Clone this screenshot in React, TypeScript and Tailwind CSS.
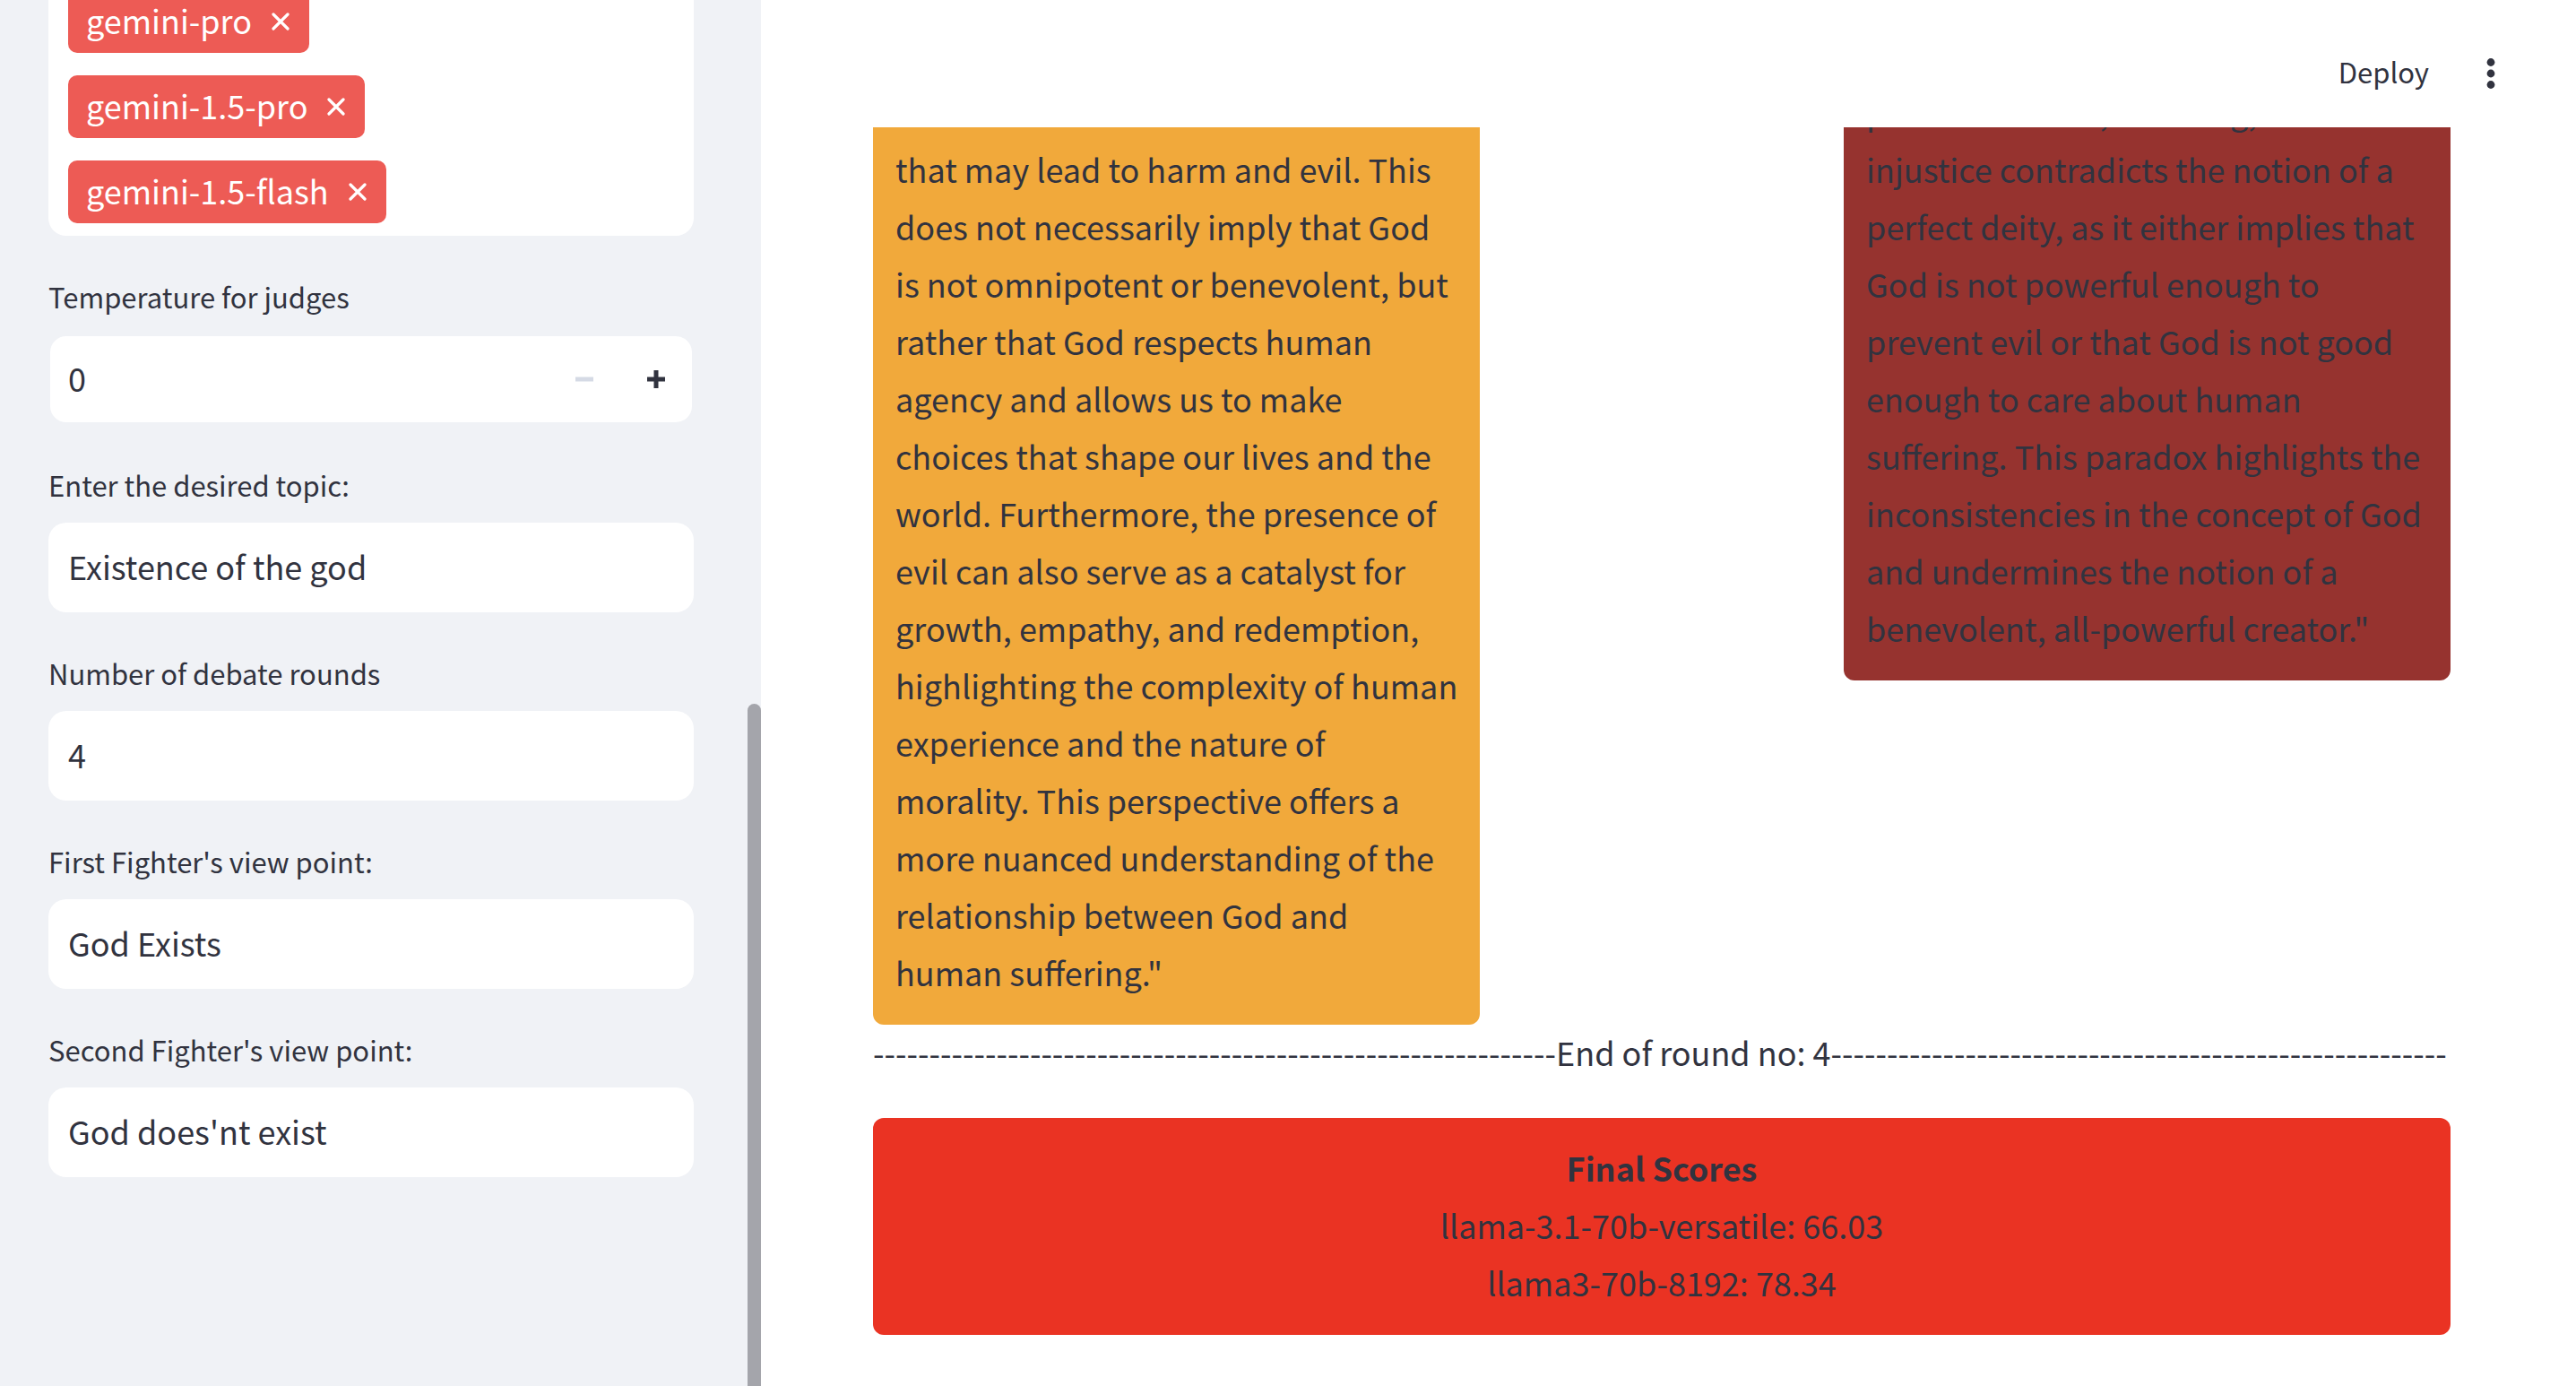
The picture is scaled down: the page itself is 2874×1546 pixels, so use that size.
import { useId, useState } from "react";

const judges = ["gemini-pro", "gemini-1.5-pro", "gemini-1.5-flash"];

function Tag({ name, onRemove }: { name: string; onRemove: () => void }) {
  return (
    <li className="flex h-[70px] items-center gap-[22px] rounded-[10px] bg-[#ed5b55] pl-5 pr-[22px] text-white">
      <span className="pb-1">{name}</span>
      <button type="button" aria-label={`Remove ${name}`} onClick={onRemove}>
        <svg viewBox="0 0 20 20" className="size-5" stroke="currentColor" strokeWidth="3.2" strokeLinecap="round">
          <path d="M2 2 18 18M18 2 2 18" />
        </svg>
      </button>
    </li>
  );
}

function FieldLabel({ id, children }: { id: string; children: string }) {
  return (
    <label htmlFor={id} className="mb-[14px] text-[31px] leading-[56px]">
      {children}
    </label>
  );
}

function TextField({ label, initial }: { label: string; initial: string }) {
  const id = useId();
  return (
    <div className="flex flex-col">
      <FieldLabel id={id}>{label}</FieldLabel>
      <input
        id={id}
        type="text"
        defaultValue={initial}
        className="h-[100px] w-full rounded-[20px] bg-white px-[22px] pb-1 outline-none"
      />
    </div>
  );
}

function Stepper({ label }: { label: string }) {
  const id = useId();
  const [value, setValue] = useState(0);
  return (
    <div className="flex flex-col">
      <FieldLabel id={id}>{label}</FieldLabel>
      <div className="flex h-[100px] rounded-[20px] border-2 border-[#f0f2f6] bg-white">
        <input
          id={id}
          type="text"
          inputMode="numeric"
          value={value}
          onChange={(e) => setValue(Number(e.target.value) || 0)}
          className="min-w-0 flex-1 pb-1 pl-5 outline-none"
        />
        <button
          type="button"
          aria-label="Decrease"
          disabled={value === 0}
          onClick={() => setValue(value - 1)}
          className="flex w-20 items-center justify-center text-[#d5dae5]"
        >
          <svg viewBox="0 0 20 20" className="size-5" fill="currentColor">
            <path d="M0 7.5h20v5H0z" />
          </svg>
        </button>
        <button
          type="button"
          aria-label="Increase"
          onClick={() => setValue(value + 1)}
          className="flex w-20 items-center justify-center"
        >
          <svg viewBox="0 0 20 20" className="size-5" fill="currentColor">
            <path d="M7.5 0h5v7.5H20v5h-7.5V20h-5v-7.5H0v-5h7.5z" />
          </svg>
        </button>
      </div>
    </div>
  );
}

function Sidebar() {
  const [selected, setSelected] = useState(judges);
  return (
    <aside className="flex w-[849px] shrink-0 overflow-hidden bg-[#f0f2f6]">
      <div className="flex flex-1 flex-col gap-10 pl-[54px] pr-[60px]">
        <ul className="-mt-[11px] flex flex-col items-start gap-[25px] rounded-b-[20px] bg-white px-[22px] pb-[14px]">
          {selected.map((name) => (
            <Tag key={name} name={name} onRemove={() => setSelected(selected.filter((n) => n !== name))} />
          ))}
        </ul>
        <Stepper label="Temperature for judges" />
        <TextField label="Enter the desired topic:" initial="Existence of the god" />
        <TextField label="Number of debate rounds" initial="4" />
        <TextField label="First Fighter's view point:" initial="God Exists" />
        <TextField label="Second Fighter's view point:" initial="God does'nt exist" />
      </div>
      <div className="flex w-[15px] flex-col pt-[785px]">
        <div className="flex-1 rounded-t-full bg-[#a4a5ab]" />
      </div>
    </aside>
  );
}

export default function App() {
  return (
    <div className="flex h-screen overflow-hidden bg-white font-['Noto_Sans_CJK_SC',sans-serif] text-[36px] leading-[64px] text-[#31333f]">
      <Sidebar />
      <div className="flex min-w-0 flex-1 flex-col">
        <header className="flex h-[142px] shrink-0 items-center justify-end gap-16 bg-white pb-[22px] pr-[90px] pt-[44px]">
          <button type="button" className="pb-1 text-[31px] leading-[60px]">
            Deploy
          </button>
          <button type="button" aria-label="Main menu">
            <svg viewBox="0 0 10 36" className="h-9 w-[10px]" fill="currentColor">
              <circle cx="5" cy="5.5" r="4.4" />
              <circle cx="5" cy="18" r="4.4" />
              <circle cx="5" cy="30.5" r="4.4" />
            </svg>
          </button>
        </header>
        <main className="min-h-0 flex-1 overflow-hidden pl-[125px] pr-[140px]">
          <div className="grid grid-cols-[5fr_3fr_5fr] items-start">
            <p className="rounded-b-xl bg-[#f1a93b] pb-[27px] pl-[25px] pr-[23px] pt-[14px]">
              that may lead to harm and evil. This does not necessarily imply that God is not omnipotent or
              benevolent, but rather that God respects human agency and allows us to make choices that shape our
              lives and the world. Furthermore, the presence of evil can also serve as a catalyst for growth,
              empathy, and redemption, highlighting the complexity of human experience and the nature of morality.
              This perspective offers a more nuanced understanding of the relationship between God and human
              suffering."
            </p>
            <div />
            <p className="-mt-[50px] rounded-b-xl bg-[#96332f] pb-[27px] pl-[25px] pr-[23px]">
              presence of evil, suffering, and injustice contradicts the notion of a perfect deity, as it either
              implies that God is not powerful enough to prevent evil or that God is not good enough to care about
              human suffering. This paradox highlights the inconsistencies in the concept of God and undermines the
              notion of a benevolent, all-powerful creator."
            </p>
          </div>
          <p className="mb-[42px] h-[62px] whitespace-nowrap leading-[60px]">
            {"-".repeat(61)}End of round no: 4{"-".repeat(55)}
          </p>
          <section className="rounded-xl bg-[#ea3323] px-[25px] pb-[27px] pt-[23px] text-center">
            <h2 className="font-bold">Final Scores</h2>
            <p>llama-3.1-70b-versatile: 66.03</p>
            <p>llama3-70b-8192: 78.34</p>
          </section>
        </main>
      </div>
    </div>
  );
}
